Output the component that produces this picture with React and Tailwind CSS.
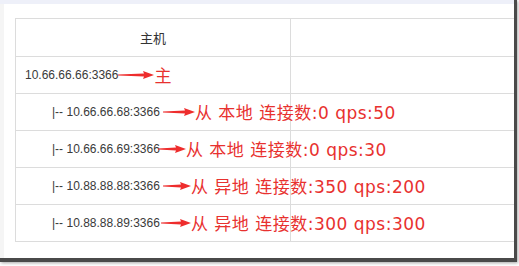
import React from "react";

const hosts = [
  { ip: "10.66.66.66:3366", child: false, note: "主", gap: 0, arrow: 36 },
  { ip: "10.66.66.68:3366", child: true, note: "从 本地 连接数:0 qps:50", gap: 3, arrow: 32 },
  { ip: "10.66.66.69:3366", child: true, note: "从 本地 连接数:0 qps:30", gap: -2, arrow: 28 },
  { ip: "10.88.88.88:3366", child: true, note: "从 异地 连接数:350 qps:200", gap: 3, arrow: 28 },
  { ip: "10.88.88.89:3366", child: true, note: "从 异地 连接数:300 qps:300", gap: 1, arrow: 30 },
];

// red hand-drawn pointer, thin tail growing into a filled head
const Arrow = ({ width }) => (
  <svg width={width} height="10" viewBox={`0 0 ${width} 10`} className="shrink-0">
    <path
      d={`M0 4.6 L${width - 10} 3.6 L${width - 11} 1 L${width} 5 L${width - 11} 9 L${width - 10} 6.4 L0 5.4 Z`}
      fill="#ee2d2d"
    />
  </svg>
);

const App = () => {
  return (
    <div className="w-[519px] h-[266px] bg-white overflow-hidden">
      <div className="w-[517px] h-[262px] bg-white border-r-[3px] border-b-[4px] border-[#4a4a4a] shadow-[1px_1px_3px_rgba(0,0,0,0.35)] flex flex-col overflow-hidden">
        <div className="h-[4px] bg-[#eef0f9] shrink-0" />
        <div className="flex-1 flex bg-white border-l-[4px] border-[#f5f5f5]">
          <div className="pl-[11px] pt-[14px] overflow-hidden flex-1">
            <table
              className="table-fixed border-collapse w-[520px] text-[#333]"
              style={{ fontFamily: '"Liberation Sans", Arial, sans-serif' }}
            >
              <colgroup>
                <col className="w-[275px]" />
                <col />
              </colgroup>
              <thead>
                <tr className="h-[38px]">
                  <th
                    className="border border-[#dcdcdc] font-normal text-[13px] text-center"
                    style={{ fontFamily: '"Noto Sans CJK SC", sans-serif' }}
                  >
                    主机
                  </th>
                  <th className="border border-[#dcdcdc]" />
                </tr>
              </thead>
              <tbody>
                {hosts.map((h) => (
                  <tr key={h.ip} className="h-[37px]">
                    <td className="border border-[#dcdcdc] p-0 overflow-visible">
                      <div
                        className={`flex items-center whitespace-nowrap ${h.child ? "pl-[36px]" : "pl-[9px]"}`}
                      >
                        <span className="text-[12px] text-[#3a3a3a]">
                          {h.child ? "|-- " : ""}
                          {h.ip}
                        </span>
                        <span style={{ marginLeft: h.gap }} className="flex">
                          <Arrow width={h.arrow} />
                        </span>
                        <span
                          className="text-[17px] tracking-[0.5px] text-[#e8312f] mt-[3px] whitespace-pre"
                          style={{ fontFamily: '"DejaVu Sans", "Noto Sans CJK SC", sans-serif' }}
                        >
                          {h.note}
                        </span>
                      </div>
                    </td>
                    <td className="border border-[#dcdcdc]" />
                  </tr>
                ))}
              </tbody>
            </table>
          </div>
        </div>
      </div>
    </div>
  );
};

export default App;
